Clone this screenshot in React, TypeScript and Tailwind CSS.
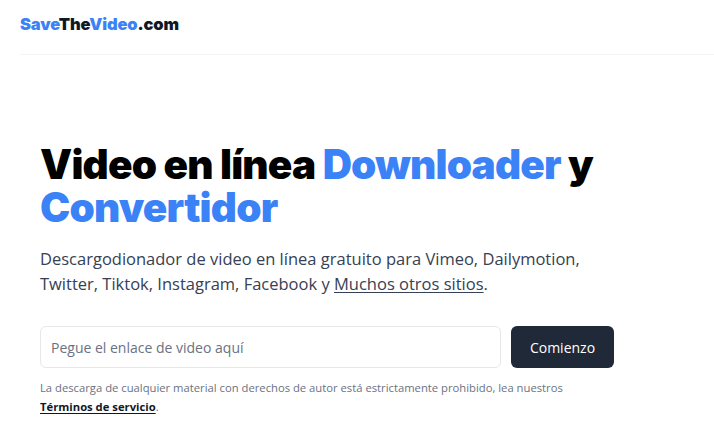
export default function App() {
  return (
    <div className="min-h-screen bg-white font-['Open_Sans','Noto_Sans',sans-serif] text-gray-900">
      <header className="ml-5 flex h-[55px] items-center border-b border-gray-100">
        <a href="#" className="pb-[6px] font-['Inter',sans-serif] text-[16.5px] font-black tracking-[-0.15px]">
          <span className="text-[#3b82f6]">Save</span>
          <span className="text-gray-900">The</span>
          <span className="text-[#3b82f6]">Video</span>
          <span className="text-gray-900">.com</span>
        </a>
      </header>

      <main className="px-10 pt-[88px]">
        <h1 className="font-['Inter',sans-serif] text-[40.5px] font-black leading-[43px] tracking-[-0.8px] text-black">
          Video en línea <span className="text-[#3b82f6]">Downloader</span> y{" "}
          <span className="text-[#3b82f6]">Convertidor</span>
        </h1>

        <p className="mt-[17px] max-w-[560px] text-[16.5px] leading-[25px] text-gray-700">
          Descargodionador de video en línea gratuito para Vimeo, Dailymotion, Twitter, Tiktok,
          Instagram, Facebook y{" "}
          <a href="#" className="underline underline-offset-2">
            Muchos otros sitios
          </a>
          .
        </p>

        <form className="mt-[30px] flex gap-[10px]" onSubmit={(e) => e.preventDefault()}>
          <input
            type="text"
            placeholder="Pegue el enlace de video aquí"
            className="h-[42px] w-[461px] rounded-md border border-gray-200 px-[10px] text-[14px] text-gray-700 placeholder:text-gray-500 focus:outline-none"
          />
          <button
            type="submit"
            className="h-[42px] w-[103px] rounded-md bg-[#1f2937] text-[14px] text-white"
          >
            Comienzo
          </button>
        </form>

        <p className="mt-[10px] text-[11.25px] leading-[19px] text-gray-500">
          La descarga de cualquier material con derechos de autor está estrictamente prohibido, lea
          nuestros
          <br />
          <a href="#" className="font-bold text-gray-900 underline underline-offset-2">
            Términos de servicio
          </a>
          .
        </p>
      </main>
    </div>
  );
}
